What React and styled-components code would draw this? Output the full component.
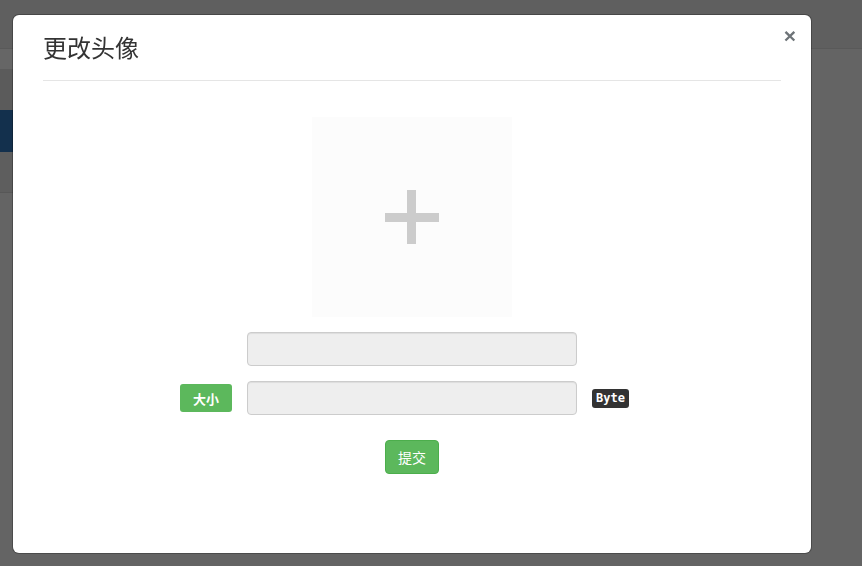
import React from "react";
import styled, { createGlobalStyle } from "styled-components";

const Global = createGlobalStyle`
  html, body { margin: 0; padding: 0; }
  body {
    width: 862px;
    height: 566px;
    overflow: hidden;
    background: #646464;
    font-family: "Liberation Sans", "Noto Sans CJK SC", Arial, sans-serif;
    color: #333;
  }
`;

const Page = styled.div`
  width: 862px;
  height: 566px;
  display: flex;
  flex-direction: column;
  background: #646464;
`;

const TopBar = styled.div`
  height: 48px;
  background: #5f5f5f;
  border-bottom: 1px solid #595959;
`;

const SideItem = styled.div`
  width: 40px;
  height: ${(p) => p.$h}px;
  background: ${(p) => p.$bg};
  border-bottom: ${(p) => (p.$line ? "1px solid #575757" : "none")};
`;

const Overlay = styled.div`
  position: fixed;
  inset: 0;
  display: flex;
  justify-content: flex-start;
  align-items: flex-start;
  padding: 15px 0 0 13px;
`;

const Modal = styled.div`
  width: 798px;
  height: 538px;
  background: #fff;
  border-radius: 6px;
  box-shadow: 0 0 0 1px rgba(0, 0, 0, 0.25);
  position: relative;
  display: flex;
  flex-direction: column;
`;

const Header = styled.div`
  margin: 0 30px;
  padding: 15px 0 16px;
  border-bottom: 1px solid #e5e5e5;
`;

const Title = styled.h4`
  margin: 0;
  font-size: 24px;
  line-height: 34px;
  font-weight: normal;
  color: #333;
  font-family: "Noto Sans CJK SC", "Liberation Sans", sans-serif;
`;

const Close = styled.button`
  position: absolute;
  top: 9px;
  right: 15px;
  border: 0;
  background: transparent;
  padding: 0;
  font-size: 21px;
  font-weight: bold;
  line-height: 24px;
  color: #6e7478;
  font-family: "Liberation Sans", Arial, sans-serif;
  cursor: pointer;
`;

const Body = styled.div`
  padding-top: 36px;
  display: flex;
  flex-direction: column;
  align-items: center;
`;

const Avatar = styled.div`
  width: 200px;
  height: 200px;
  background: #fcfcfc;
  display: flex;
  align-items: center;
  justify-content: center;
`;

const Grid = styled.div`
  margin-top: 15px;
  width: 100%;
  display: grid;
  grid-template-columns: 1fr 330px 1fr;
  column-gap: 15px;
  row-gap: 15px;
  align-items: center;
`;

const Input = styled.input`
  grid-column: 2;
  box-sizing: border-box;
  width: 330px;
  height: 34px;
  background: #eee;
  border: 1px solid #ccc;
  border-radius: 4px;
  box-shadow: inset 0 1px 1px rgba(0, 0, 0, 0.075);
  outline: none;
`;

const Label = styled.span`
  grid-column: 1;
  justify-self: end;
  width: 52px;
  height: 28px;
  box-sizing: border-box;
  background: #5cb85c;
  color: #fff;
  border-radius: 3px;
  font-size: 13px;
  font-weight: bold;
  display: flex;
  align-items: center;
  justify-content: center;
  font-family: "Noto Sans CJK SC", sans-serif;
`;

const Unit = styled.span`
  grid-column: 3;
  justify-self: start;
  background: #333;
  color: #fff;
  border-radius: 3px;
  padding: 0 4px;
  height: 19px;
  line-height: 19px;
  font-size: 12px;
  font-weight: bold;
  font-family: "DejaVu Sans Mono", "Liberation Mono", monospace;
`;

const Submit = styled.button`
  margin-top: 25px;
  width: 54px;
  height: 34px;
  background: #5cb85c;
  border: 1px solid #4cae4c;
  border-radius: 4px;
  color: #fff;
  font-size: 14px;
  font-family: "Noto Sans CJK SC", sans-serif;
  padding: 0;
  cursor: pointer;
`;

export default function App() {
  return (
    <>
      <Global />
      <Page>
        <TopBar />
        <SideItem $h={20} $bg="#666666" />
        <SideItem $h={41} $bg="#5b5b5b" />
        <SideItem $h={42} $bg="#13304d" />
        <SideItem $h={40} $bg="#5e5e5e" $line />
      </Page>
      <Overlay>
        <Modal>
          <Header>
            <Title>更改头像</Title>
          </Header>
          <Close aria-label="close">×</Close>
          <Body>
            <Avatar>
              <svg width="54" height="54" viewBox="0 0 54 54">
                <rect x="0" y="23" width="54" height="9" fill="#cccccc" />
                <rect x="22" y="0" width="9" height="54" fill="#cccccc" />
              </svg>
            </Avatar>
            <Grid>
              <Input />
              <Label>大小</Label>
              <Input />
              <Unit>Byte</Unit>
            </Grid>
            <Submit>提交</Submit>
          </Body>
        </Modal>
      </Overlay>
    </>
  );
}
